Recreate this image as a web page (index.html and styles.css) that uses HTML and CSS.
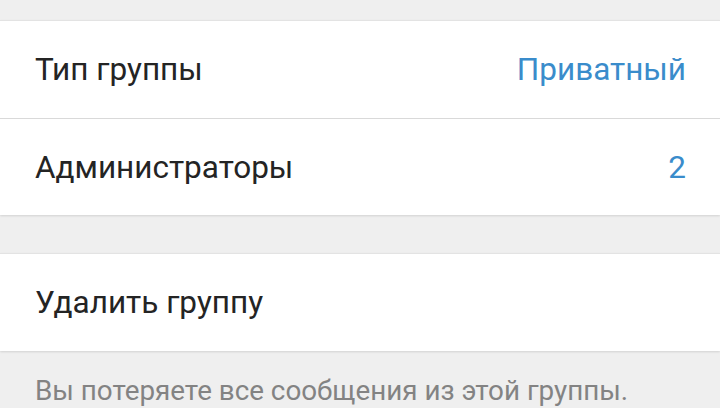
FILE: index.html
```html
<!DOCTYPE html>
<html lang="ru">
<head>
<meta charset="utf-8">
<link rel="stylesheet" href="styles.css">
</head>
<body>
<div class="page">
  <div class="top-gap"></div>
  <section class="card">
    <div class="row">
      <span class="label">Тип группы</span>
      <span class="value">Приватный</span>
    </div>
    <div class="divider"></div>
    <div class="row row-b">
      <span class="label">Администраторы</span>
      <span class="value">2</span>
    </div>
  </section>
  <section class="card card-2">
    <div class="row">
      <span class="label">Удалить группу</span>
    </div>
  </section>
  <p class="hint">Вы потеряете все сообщения из этой группы.</p>
</div>
</body>
</html>
```

FILE: styles.css
```css
html, body {
  margin: 0;
  padding: 0;
  background: #efefef;
}
body {
  font-family: Roboto, "Noto Sans", "Liberation Sans", sans-serif;
  width: 720px;
  height: 408px;
  overflow: hidden;
}
.page {
  display: flex;
  flex-direction: column;
}
.top-gap {
  height: 20px;
}
.card {
  background: #ffffff;
  border-top: 1px solid #e3e3e3;
  box-shadow: 0 1px 2px rgba(0, 0, 0, 0.12);
}
.card-2 {
  margin-top: 38px;
}
.row {
  height: 97px;
  display: flex;
  align-items: center;
  justify-content: space-between;
  padding: 0 34px 0 35px;
}
.row-b {
  height: 96px;
}
.divider {
  height: 1px;
  background: #d9d9d9;
}
.label {
  font-size: 31.5px;
  color: #242424;
}
.value {
  font-size: 31.5px;
  color: #3a8ccb;
}
.hint {
  margin: 0;
  padding: 23px 35px 0 35px;
  font-size: 27.8px;
  color: #838383;
}
```
